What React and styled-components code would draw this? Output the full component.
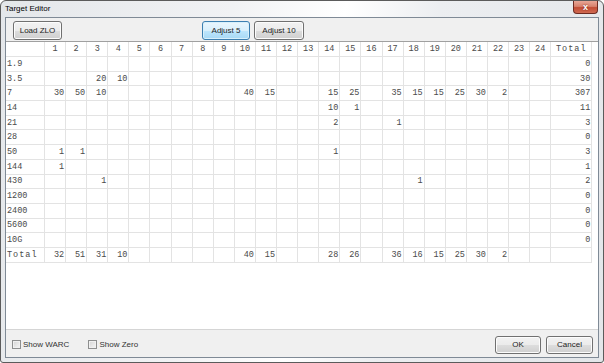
import React from 'react'
import styled, { createGlobalStyle } from 'styled-components'

const GlobalStyle = createGlobalStyle`
    html, body {
        margin: 0;
        padding: 0;
        background: #ffffff;
    }
`

const uiFont = `"Liberation Sans", Arial, sans-serif`
const gridFont = `"Liberation Mono", "DejaVu Sans Mono", monospace`

const Frame = styled.div`
    box-sizing: border-box;
    width: 604px;
    height: 363px;
    display: flex;
    flex-direction: column;
    border: 1px solid #5b5b5b;
    border-radius: 6px 6px 3px 3px;
    padding: 0 4px 4px 4px;
    background: linear-gradient(100deg, #e4e7ea 0%, #f1f2f4 35%, #ffffff 52%, #eceef1 66%, #e3e6e9 100%);
    font-family: ${uiFont};
`

const TitleBar = styled.div`
    height: 16px;
    display: flex;
    align-items: center;
    justify-content: space-between;
`

const Title = styled.span`
    font-size: 8px;
    color: #000;
    margin-top: -2px;
`

const CloseButton = styled.div`
    box-sizing: border-box;
    width: 25px;
    height: 13px;
    margin-top: -3px;
    margin-right: 1px;
    border: 1px solid #6d2b22;
    border-top: none;
    border-radius: 0 0 4px 4px;
    background: linear-gradient(#e8a696 0%, #d7826d 45%, #c24c34 55%, #cf6a52 100%);
    color: #fff;
    font-size: 9px;
    font-weight: bold;
    display: flex;
    align-items: center;
    justify-content: center;
    line-height: 1;
    text-shadow: 0 0 2px #7a2010;
`

const Client = styled.div`
    flex: 1;
    display: flex;
    flex-direction: column;
    border: 1px solid #7f8a96;
    background: #f0f0f0;
    min-height: 0;
`

const Toolbar = styled.div`
    height: 23px;
    display: flex;
    align-items: flex-start;
    padding: 3px 0 0 7px;
    box-sizing: border-box;
`

const ButtonGroup = styled.div`
    display: flex;
    gap: ${p => p.$gap || 4}px;
    margin-left: ${p => p.$offset || 0}px;
`

const Button = styled.div`
    box-sizing: border-box;
    width: ${p => p.$w || 48}px;
    height: ${p => p.$h || 19}px;
    display: flex;
    align-items: center;
    justify-content: center;
    font-size: 8px;
    color: #222;
    border: 1px solid ${p => (p.$primary ? '#3c7fb1' : '#707070')};
    border-radius: 3px;
    box-shadow: inset 0 0 0 1px ${p => (p.$primary ? '#d8f0fb' : '#fcfcfc')};
    background: ${p =>
        p.$primary
            ? 'linear-gradient(#eaf6fd 0%, #d9f0fc 50%, #bee6fd 51%, #a7d9f5 100%)'
            : 'linear-gradient(#f2f2f2 0%, #ebebeb 50%, #dddddd 51%, #cfcfcf 100%)'};
`

const GridArea = styled.div`
    flex: 1;
    background: #ffffff;
    border-top: 1px solid #a0a0a0;
    border-bottom: 1px solid #d5d5d5;
`

const Grid = styled.div`
    display: grid;
    grid-template-columns: 39px repeat(24, 21.1px) 41px;
    grid-template-rows: 15px repeat(14, 14.7px);
    font-family: ${gridFont};
    font-size: 8.5px;
    color: #4a4a4a;
`

const Cell = styled.div`
    box-sizing: border-box;
    border-right: 1px solid #e3e3e3;
    border-bottom: 1px solid #e3e3e3;
    display: flex;
    align-items: center;
    justify-content: ${p => (p.$align === 'left' ? 'flex-start' : p.$align === 'center' ? 'center' : 'flex-end')};
    padding: ${p => (p.$align === 'left' ? '0 0 0 1px' : p.$align === 'center' ? '0' : '0 1px 0 0')};
    letter-spacing: ${p => (p.$spaced ? '1px' : '0')};
    white-space: nowrap;
    overflow: hidden;
`

const Footer = styled.div`
    height: 27px;
    display: flex;
    align-items: center;
    padding: 2px 5px 0 6px;
    box-sizing: border-box;
`

const CheckLabel = styled.label`
    display: flex;
    align-items: center;
    gap: 2px;
    font-size: 8px;
    color: #333;
    margin-right: ${p => p.$mr || 0}px;
`

const Box = styled.span`
    box-sizing: border-box;
    width: 9px;
    height: 9px;
    border: 1px solid #8e8f8f;
    background: linear-gradient(135deg, #d4d4d4 0%, #e9e9e9 60%, #f4f4f4 100%);
    box-shadow: inset 0 0 0 1px #f0f0f0;
`

const Spacer = styled.div`
    flex: 1;
`

const rows = [
    { label: '1.9', vals: {} },
    { label: '3.5', vals: { 3: 20, 4: 10 } },
    { label: '7', vals: { 1: 30, 2: 50, 3: 10, 10: 40, 11: 15, 14: 15, 15: 25, 17: 35, 18: 15, 19: 15, 20: 25, 21: 30, 22: 2 } },
    { label: '14', vals: { 14: 10, 15: 1 } },
    { label: '21', vals: { 14: 2, 17: 1 } },
    { label: '28', vals: {} },
    { label: '50', vals: { 1: 1, 2: 1, 14: 1 } },
    { label: '144', vals: { 1: 1 } },
    { label: '430', vals: { 3: 1, 18: 1 } },
    { label: '1200', vals: {} },
    { label: '2400', vals: {} },
    { label: '5600', vals: {} },
    { label: '10G', vals: {} },
]

const hours = Array.from({ length: 24 }, (_, i) => i + 1)

function TargetGrid() {
    const colTotals = {}
    hours.forEach(h => {
        const sum = rows.reduce((acc, r) => acc + (r.vals[h] || 0), 0)
        if (sum) colTotals[h] = sum
    })

    return (
        <Grid>
            <Cell $align="left" />
            {hours.map(h => (
                <Cell key={h} $align="center">{h}</Cell>
            ))}
            <Cell $align="center" $spaced>Total</Cell>

            {rows.map(r => {
                const total = Object.values(r.vals).reduce((a, b) => a + b, 0)
                return (
                    <React.Fragment key={r.label}>
                        <Cell $align="left">{r.label}</Cell>
                        {hours.map(h => (
                            <Cell key={h}>{r.vals[h] || ''}</Cell>
                        ))}
                        <Cell>{total}</Cell>
                    </React.Fragment>
                )
            })}

            <Cell $align="left" $spaced>Total</Cell>
            {hours.map(h => (
                <Cell key={h}>{colTotals[h] || ''}</Cell>
            ))}
            <Cell />
        </Grid>
    )
}

export default function App() {
    return (
        <>
            <GlobalStyle />
            <Frame>
                <TitleBar>
                    <Title>Target Editor</Title>
                    <CloseButton>x</CloseButton>
                </TitleBar>
                <Client>
                    <Toolbar>
                        <Button $w={49}>Load ZLO</Button>
                        <ButtonGroup $offset={140}>
                            <Button $primary>Adjust 5</Button>
                            <Button $w={50}>Adjust 10</Button>
                        </ButtonGroup>
                    </Toolbar>
                    <GridArea>
                        <TargetGrid />
                    </GridArea>
                    <Footer>
                        <CheckLabel $mr={19}>
                            <Box />
                            Show WARC
                        </CheckLabel>
                        <CheckLabel>
                            <Box />
                            Show Zero
                        </CheckLabel>
                        <Spacer />
                        <ButtonGroup $gap={5}>
                            <Button $w={46} $h={18}>OK</Button>
                            <Button $w={47} $h={18}>Cancel</Button>
                        </ButtonGroup>
                    </Footer>
                </Client>
            </Frame>
        </>
    )
}
